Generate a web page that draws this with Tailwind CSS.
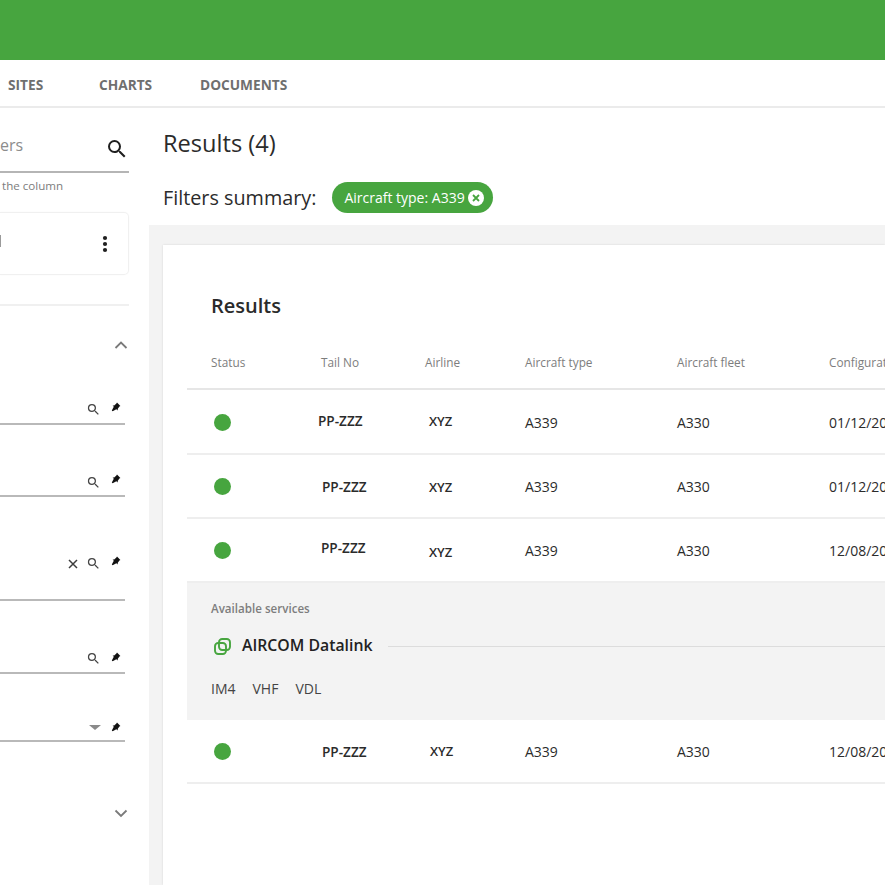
<!DOCTYPE html>
<html lang="en">
<head>
  <meta charset="UTF-8" />
  <title>Results</title>
  <script src="https://cdn.jsdelivr.net/npm/@tailwindcss/browser@4"></script>
</head>
<body class="w-[885px] h-[885px] overflow-hidden bg-white font-['Open_Sans',sans-serif] text-[#2b2b2b]">
  <!-- top bar -->
  <header class="h-[60px] bg-[#47a53f]"></header>

  <!-- tabs -->
  <nav class="h-[48px] border-b-2 border-[#ebebeb] flex items-center pt-[5px] text-[13.7px] font-bold text-[#6f6f6f]">
    <a class="ml-[8px] w-[91px]">SITES</a>
    <a class="w-[101px]">CHARTS</a>
    <a>DOCUMENTS</a>
  </nav>

  <div class="flex h-[777px]">
    <!-- filters column, cut by the window on the left -->
    <aside class="w-[149px] shrink-0 pr-[20px]">
      <div class="h-[65px] border-b-2 border-[#b5b5b5] flex items-end justify-between pb-[10px]">
        <span class="text-[16px] leading-[22px] text-[#8c8c8c] mb-[5px]">ers</span>
        <svg class="w-[24px] h-[24px]" viewBox="0 0 24 24" fill="#1f1f1f"><path d="M15.5 14h-.79l-.28-.27A6.47 6.47 0 0 0 16 9.5 6.5 6.5 0 1 0 9.5 16c1.61 0 3.09-.59 4.23-1.57l.27.28v.79l5 4.99L20.49 19l-4.99-5zm-6 0C7.01 14 5 11.99 5 9.5S7.01 5 9.5 5 14 7.01 14 9.5 11.99 14 9.5 14z"/></svg>
      </div>
      <p class="pl-[2px] mt-[5px] text-[11.6px] leading-[16px] text-[#7d7d7d]">the column</p>

      <div class="mt-[18px] h-[63px] border border-l-0 border-[#f0f0f0] rounded-r-[5px] flex items-center justify-between shadow-[0_0_2px_rgba(0,0,0,0.03)]">
        <span class="w-[1px] h-[12px] bg-[#9a9a9a] -mt-[6px]"></span>
        <svg class="w-[6px] h-[18px] mr-[20px]" viewBox="0 0 6 18" fill="#1f1f1f"><circle cx="3" cy="3" r="2.1"/><circle cx="3" cy="9" r="2.1"/><circle cx="3" cy="15" r="2.1"/></svg>
      </div>

      <div class="mt-[29px] border-t-2 border-[#f0f0f0] pt-[31px] pr-[1px]">
        <div class="flex justify-end h-[18px]">
          <svg class="w-[16px] h-[16px] -mr-[1px]" viewBox="0 0 16 16" fill="none" stroke="#7a7a7a" stroke-width="1.8"><path d="M2.5 11 8 5.6 13.5 11"/></svg>
        </div>

        <div class="mt-[46px] mr-[3px] h-[24px] border-b-2 border-[#b9b9b9] pr-[4px] flex justify-end gap-[10px] items-start">
          <svg class="w-[15px] h-[15px] mt-[1px]" viewBox="0 0 24 24" fill="#444"><path d="M15.5 14h-.79l-.28-.27A6.47 6.47 0 0 0 16 9.5 6.5 6.5 0 1 0 9.5 16c1.61 0 3.09-.59 4.23-1.57l.27.28v.79l5 4.99L20.49 19l-4.99-5zm-6 0C7.01 14 5 11.99 5 9.5S7.01 5 9.5 5 14 7.01 14 9.5 11.99 14 9.5 14z"/></svg>
          <svg class="w-[10px] h-[10px] mt-[1px]" viewBox="0 0 10 10" fill="#111"><path d="M6 .6 9.4 4l-1 .6-1.6 2.2-.2 1.6-1.2-1.2L1.6 9.2l-.8-.8 2-3.6L1.6 3.6l1.6-.2L5.4 1.6z"/></svg>
        </div>

        <div class="mt-[48px] mr-[3px] h-[24px] border-b-2 border-[#b9b9b9] pr-[4px] flex justify-end gap-[10px] items-start">
          <svg class="w-[15px] h-[15px] mt-[2px]" viewBox="0 0 24 24" fill="#444"><path d="M15.5 14h-.79l-.28-.27A6.47 6.47 0 0 0 16 9.5 6.5 6.5 0 1 0 9.5 16c1.61 0 3.09-.59 4.23-1.57l.27.28v.79l5 4.99L20.49 19l-4.99-5zm-6 0C7.01 14 5 11.99 5 9.5S7.01 5 9.5 5 14 7.01 14 9.5 11.99 14 9.5 14z"/></svg>
          <svg class="w-[10px] h-[10px] mt-[1px]" viewBox="0 0 10 10" fill="#111"><path d="M6 .6 9.4 4l-1 .6-1.6 2.2-.2 1.6-1.2-1.2L1.6 9.2l-.8-.8 2-3.6L1.6 3.6l1.6-.2L5.4 1.6z"/></svg>
        </div>

        <div class="mt-[48px] mr-[3px] h-[56px] border-b-2 border-[#b9b9b9] pr-[4px] pt-[11px] flex justify-end gap-[10px] items-start">
          <svg class="w-[12px] h-[12px] mt-[2px] -mr-[3px]" viewBox="0 0 12 12" fill="none" stroke="#3d3d3d" stroke-width="1.5"><path d="M2 2l8 8M10 2l-8 8"/></svg>
          <svg class="w-[15px] h-[15px]" viewBox="0 0 24 24" fill="#444"><path d="M15.5 14h-.79l-.28-.27A6.47 6.47 0 0 0 16 9.5 6.5 6.5 0 1 0 9.5 16c1.61 0 3.09-.59 4.23-1.57l.27.28v.79l5 4.99L20.49 19l-4.99-5zm-6 0C7.01 14 5 11.99 5 9.5S7.01 5 9.5 5 14 7.01 14 9.5 11.99 14 9.5 14z"/></svg>
          <svg class="w-[10px] h-[10px]" viewBox="0 0 10 10" fill="#111"><path d="M6 .6 9.4 4l-1 .6-1.6 2.2-.2 1.6-1.2-1.2L1.6 9.2l-.8-.8 2-3.6L1.6 3.6l1.6-.2L5.4 1.6z"/></svg>
        </div>

        <div class="mt-[33px] mr-[3px] h-[40px] border-b-2 border-[#b9b9b9] pr-[4px] pt-[17px] flex justify-end gap-[10px] items-start">
          <svg class="w-[15px] h-[15px]" viewBox="0 0 24 24" fill="#444"><path d="M15.5 14h-.79l-.28-.27A6.47 6.47 0 0 0 16 9.5 6.5 6.5 0 1 0 9.5 16c1.61 0 3.09-.59 4.23-1.57l.27.28v.79l5 4.99L20.49 19l-4.99-5zm-6 0C7.01 14 5 11.99 5 9.5S7.01 5 9.5 5 14 7.01 14 9.5 11.99 14 9.5 14z"/></svg>
          <svg class="w-[10px] h-[10px] mt-[1px]" viewBox="0 0 10 10" fill="#111"><path d="M6 .6 9.4 4l-1 .6-1.6 2.2-.2 1.6-1.2-1.2L1.6 9.2l-.8-.8 2-3.6L1.6 3.6l1.6-.2L5.4 1.6z"/></svg>
        </div>

        <div class="mt-[43px] mr-[3px] h-[25px] border-b-2 border-[#b9b9b9] pr-[4px] flex justify-end gap-[9px] items-start">
          <span class="w-0 h-0 mt-[8px] mr-[1px] border-x-[6px] border-x-transparent border-t-[5px] border-t-[#8a8a8a]"></span>
          <svg class="w-[10px] h-[10px] mt-[5px]" viewBox="0 0 10 10" fill="#111"><path d="M6 .6 9.4 4l-1 .6-1.6 2.2-.2 1.6-1.2-1.2L1.6 9.2l-.8-.8 2-3.6L1.6 3.6l1.6-.2L5.4 1.6z"/></svg>
        </div>

        <div class="mt-[63px] flex justify-end">
          <svg class="w-[16px] h-[16px] -mr-[1px]" viewBox="0 0 16 16" fill="none" stroke="#7a7a7a" stroke-width="1.8"><path d="M2.5 5.5 8 11l5.5-5.5"/></svg>
        </div>
      </div>
    </aside>

    <!-- results -->
    <main class="flex-1 min-w-0">
      <div class="pl-[15px] pt-[18px] h-[117px]">
        <h1 class="-ml-[1px] text-[23.6px] leading-[34px] text-[#2b2b2b]">Results (4)</h1>
        <div class="mt-[21px] flex items-center gap-[16px]">
          <span class="-ml-[1px] mt-[1px] text-[19.8px] leading-[32px]">Filters summary:</span>
          <span class="h-[31px] rounded-full bg-[#47a53f] text-white text-[14px] flex items-center pl-[12px] pr-[9px] gap-[3px]">
            Aircraft type: A339
            <svg class="w-[16px] h-[16px]" viewBox="0 0 16 16"><circle cx="8" cy="8" r="8" fill="#fff"/><path d="M5 5l6 6M11 5l-6 6" stroke="#47a53f" stroke-width="1.8"/></svg>
          </span>
        </div>
      </div>

      <div class="bg-[#f3f3f3] pl-[14px] pt-[20px] h-[660px]">
        <section class="bg-white h-full pl-[24px] pt-[47px] shadow-[0_0_2px_rgba(0,0,0,0.12)]">
          <h2 class="ml-[24px] text-[20px] leading-[28px] font-semibold text-[#2b2b2b]">Results</h2>

          <div class="mt-[33px] h-[37px] border-b-2 border-[#e6e6e6] grid grid-cols-[110px_104px_100px_152px_152px_1fr] pl-[24px] text-[11.8px] leading-[18px] text-[#7d7d7d] whitespace-nowrap">
            <span>Status</span><span>Tail No</span><span>Airline</span><span>Aircraft type</span><span>Aircraft fleet</span><span>Configuration</span>
          </div>

          <div class="h-[65px] border-b-2 border-[#eeeeee] grid grid-cols-[110px_104px_100px_152px_152px_1fr] items-center pl-[24px] text-[14px] whitespace-nowrap">
            <span class="w-[17px] h-[17px] ml-[3px] mt-[2px] rounded-full bg-[#47a53f]"></span>
            <span class="-ml-[3px] -mt-[1px] font-[560] text-[13.6px]">PP-ZZZ</span>
            <span class="ml-[4px] mt-[1px] font-[560] text-[13px]">XYZ</span>
            <span class="mt-[2px]">A339</span><span class="mt-[2px]">A330</span><span class="mt-[2px]">01/12/2020</span>
          </div>
          <div class="h-[64px] border-b-2 border-[#eeeeee] grid grid-cols-[110px_104px_100px_152px_152px_1fr] items-center pl-[24px] text-[14px] whitespace-nowrap">
            <span class="w-[17px] h-[17px] ml-[3px] rounded-full bg-[#47a53f]"></span>
            <span class="ml-[1px] mt-[2px] font-[560] text-[13.6px]">PP-ZZZ</span>
            <span class="ml-[4px] mt-[3px] font-[560] text-[13px]">XYZ</span>
            <span>A339</span><span>A330</span><span>01/12/2020</span>
          </div>
          <div class="h-[64px] border-b-2 border-[#eeeeee] grid grid-cols-[110px_104px_100px_152px_152px_1fr] items-center pl-[24px] text-[14px] whitespace-nowrap">
            <span class="w-[17px] h-[17px] ml-[3px] rounded-full bg-[#47a53f]"></span>
            <span class="-mt-[3px] font-[560] text-[13.6px]">PP-ZZZ</span>
            <span class="ml-[4px] mt-[5px] font-[560] text-[13px]">XYZ</span>
            <span>A339</span><span>A330</span><span>12/08/2020</span>
          </div>

          <!-- expanded row -->
          <div class="h-[137px] bg-[#f3f3f3] pl-[24px] pt-[18px]">
            <p class="text-[11.6px] leading-[16px] font-semibold text-[#7d7d7d]">Available services</p>
            <div class="mt-[17px] flex items-center h-[24px]">
              <svg class="w-[17px] h-[17px] ml-[3px]" viewBox="0 0 17 17" fill="none" stroke="#47a53f" stroke-width="1.9"><rect x="1" y="5" width="11" height="11" rx="3.2"/><rect x="5" y="1" width="11" height="11" rx="3.2"/></svg>
              <span class="ml-[11px] text-[15.8px] font-semibold text-[#222]">AIRCOM Datalink</span>
              <span class="ml-[15px] flex-1 h-[1px] bg-[#dcdcdc]"></span>
            </div>
            <div class="mt-[21px] flex gap-[17px] text-[14px] leading-[20px] text-[#444]">
              <span>IM4</span><span>VHF</span><span>VDL</span>
            </div>
          </div>

          <div class="h-[64px] border-b-2 border-[#eeeeee] grid grid-cols-[110px_104px_100px_152px_152px_1fr] items-center pl-[24px] text-[14px] whitespace-nowrap">
            <span class="w-[17px] h-[17px] ml-[3px] rounded-full bg-[#47a53f]"></span>
            <span class="ml-[1px] mt-[3px] font-[560] text-[13.6px]">PP-ZZZ</span>
            <span class="ml-[5px] mt-[2px] font-[560] text-[13px]">XYZ</span>
            <span>A339</span><span>A330</span><span>12/08/2020</span>
          </div>
        </section>
      </div>
    </main>
  </div>
</body>
</html>
